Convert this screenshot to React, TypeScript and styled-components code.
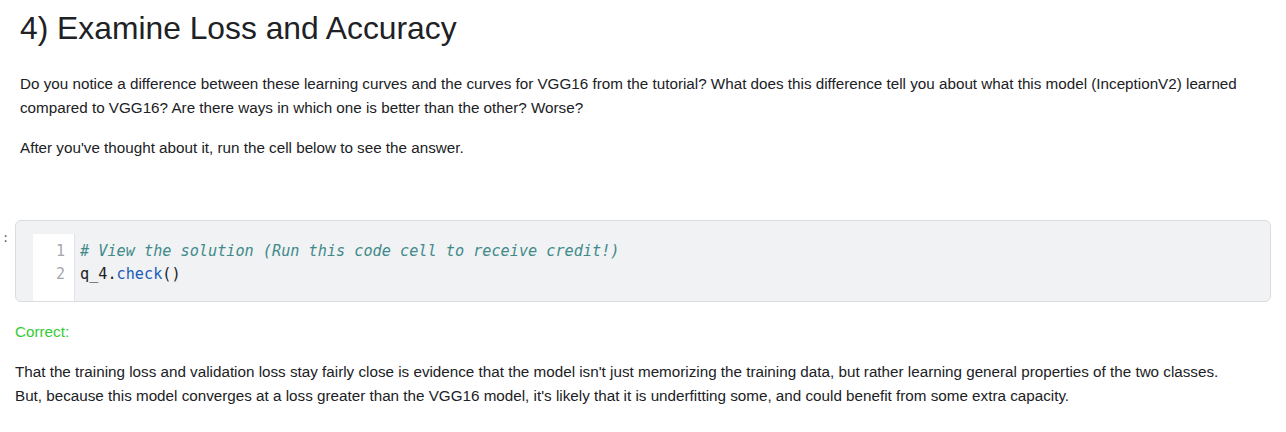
import React from "react";
import styled, { createGlobalStyle } from "styled-components";

const Global = createGlobalStyle`
  html, body { margin: 0; padding: 0; background: #fff; }
  body { font-family: "Liberation Sans", Arial, sans-serif; color: #212121; }
`;

const Page = styled.div`
  width: 1286px;
  height: 432px;
  overflow: hidden;
  display: flex;
  flex-direction: column;
`;

const Markdown = styled.section`
  padding: 0 20px;
`;

const Heading = styled.h2`
  margin: 0;
  padding-top: 8px;
  font-size: 31.8px;
  font-weight: 400;
  line-height: 40px;
  color: #202124;
`;

const Para = styled.p<{ $top?: number }>`
  margin: ${(p) => p.$top ?? 16}px 0 0;
  font-size: 15.23px;
  line-height: 24px;
  color: #202124;
  white-space: nowrap;
`;

const CellRow = styled.div`
  display: flex;
  align-items: flex-start;
  margin-top: 60px;
  padding-right: 15px;
`;

const Prompt = styled.div`
  width: 15px;
  flex: none;
  font-family: "DejaVu Sans Mono", monospace;
  font-size: 12px;
  color: #5f6368;
  padding-top: 11px;
  padding-left: 2px;
  box-sizing: border-box;
`;

const CodeBox = styled.div`
  flex: 1;
  height: 82px;
  box-sizing: border-box;
  background: #f1f2f4;
  border: 1px solid #dadce0;
  border-radius: 6px;
  padding: 13px 0 0 17px;
  display: flex;
`;

const Gutter = styled.div`
  width: 42px;
  background: #fff;
  border-right: 1px solid #e2e3e6;
  box-sizing: border-box;
  padding: 6px 9px 0 0;
  text-align: right;
  font-family: "DejaVu Sans Mono", monospace;
  font-size: 15px;
  line-height: 22.5px;
  color: #a4a7ab;
  align-self: stretch;
`;

const Code = styled.pre`
  margin: 0;
  padding: 6px 0 0 5px;
  font-family: "DejaVu Sans Mono", monospace;
  font-size: 15.2px;
  line-height: 22.5px;
  color: #202124;
  letter-spacing: 0;
`;

const Comment = styled.span`
  font-style: italic;
  color: #408a8a;
`;

const Method = styled.span`
  color: #1a5cb8;
`;

const Output = styled.section`
  padding: 0 15px;
  margin-top: 20px;
`;

const Correct = styled.div`
  font-size: 15.23px;
  line-height: 20px;
  color: #33cc33;
`;

const OutPara = styled.p`
  margin: 18px 0 0;
  font-size: 15.23px;
  line-height: 24px;
  color: #202124;
  white-space: nowrap;
`;

export default function App() {
  return (
    <Page>
      <Global />
      <Markdown>
        <Heading>4) Examine Loss and Accuracy</Heading>
        <Para $top={24}>
          Do you notice a difference between these learning curves and the curves for VGG16 from the tutorial? What does this difference tell you about what this model (InceptionV2) learned
          <br />
          compared to VGG16? Are there ways in which one is better than the other? Worse?
        </Para>
        <Para>After you've thought about it, run the cell below to see the answer.</Para>
      </Markdown>
      <CellRow>
        <Prompt>:</Prompt>
        <CodeBox>
          <Gutter>
            1
            <br />2
          </Gutter>
          <Code>
            <Comment># View the solution (Run this code cell to receive credit!)</Comment>
            {"\n"}q_4.<Method>check</Method>()
          </Code>
        </CodeBox>
      </CellRow>
      <Output>
        <Correct>Correct:</Correct>
        <OutPara>
          That the training loss and validation loss stay fairly close is evidence that the model isn't just memorizing the training data, but rather learning general properties of the two classes.
          <br />
          But, because this model converges at a loss greater than the VGG16 model, it's likely that it is underfitting some, and could benefit from some extra capacity.
        </OutPara>
      </Output>
    </Page>
  );
}
